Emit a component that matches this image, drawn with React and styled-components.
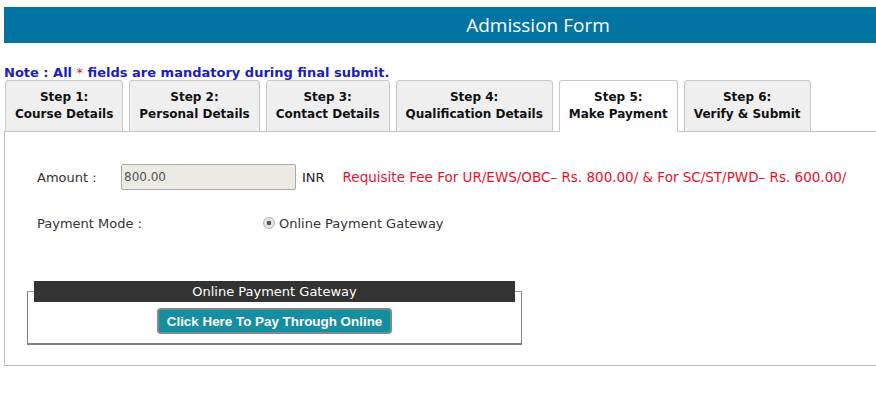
import React from 'react'
import styled, { createGlobalStyle } from 'styled-components'

const GlobalStyle = createGlobalStyle`
  html, body {
    margin: 0;
    padding: 0;
    overflow: hidden;
    background: #fff;
  }
  body {
    font-family: "DejaVu Sans", Verdana, sans-serif;
    font-size: 13px;
    color: #333;
  }
`

const Page = styled.div`
  width: 1068px;
  padding: 7px 0 0 4px;
`

const Header = styled.div`
  height: 36px;
  background: #0274a2;
  color: #fff;
  font-family: "Open Sans", sans-serif;
  font-size: 19px;
  line-height: 36px;
  text-align: center;
`

const Note = styled.div`
  margin-top: 22px;
  color: #1c1cc4;
  font-weight: bold;
  font-size: 13px;
  line-height: 15px;
  span {
    color: #e8112d;
    font-weight: normal;
  }
`

const Tabs = styled.div`
  display: flex;
  gap: 6px;
  padding-left: 1px;
  position: relative;
  z-index: 1;
`

const Tab = styled.div`
  padding: 8px 9px;
  background: ${p => (p.$active ? '#fff' : '#efefef')};
  border: 1px solid #c8c8c8;
  border-bottom-color: ${p => (p.$active ? '#fff' : '#c8c8c8')};
  border-radius: 3px 3px 0 0;
  color: #111;
  font-weight: bold;
  font-size: 12px;
  line-height: 17px;
  text-align: center;
  white-space: nowrap;
  margin-bottom: -1px;
`

const Panel = styled.div`
  border: 1px solid #c0c0c0;
  box-sizing: border-box;
  height: 235px;
  padding: 32px 0 0 32px;
`

const Row = styled.div`
  display: flex;
  align-items: center;
  height: 26px;
  margin-bottom: ${p => p.$gap || 0}px;
`

const Label = styled.div`
  width: ${p => p.$w}px;
  color: #333;
`

const AmountBox = styled.div`
  box-sizing: border-box;
  width: 175px;
  height: 26px;
  background: #ebebe4;
  border: 1px solid #a9a9a9;
  border-radius: 2px;
  color: #545454;
  font-size: 12px;
  line-height: 24px;
  padding-left: 2px;
`

const Unit = styled.span`
  margin-left: 6px;
  color: #222;
`

const Fee = styled.span`
  margin-left: 18px;
  color: #e8112d;
  font-size: 13.5px;
`

const Radio = styled.span`
  display: inline-block;
  width: 10px;
  height: 10px;
  border-radius: 50%;
  border: 1px solid #b4b4b4;
  background: radial-gradient(circle, #555 0 2px, #e4e4e4 2.6px);
  margin-right: 4px;
  box-sizing: content-box;
`

const GatewayWrap = styled.div`
  margin-left: -10px;
`

const Gateway = styled.fieldset`
  width: 495px;
  box-sizing: border-box;
  margin: 0;
  padding: 0 6px 9px;
  border: 1px solid #808080;
  border-top-color: #999;
  border-bottom: 2px solid #808080;
  display: flex;
  justify-content: center;
`

const Legend = styled.legend`
  width: 100%;
  padding: 0;
  height: 21px;
  line-height: 21px;
  background: #333;
  color: #fff;
  text-align: center;
  font-size: 13px;
`

const PayButton = styled.button`
  margin-top: 6px;
  height: 26px;
  padding: 0 8px;
  background: #12909f;
  color: #fff;
  border: 2px solid #7d8a8d;
  border-radius: 4px;
  font-family: "Liberation Sans", Arial, sans-serif;
  font-weight: bold;
  font-size: 13.4px;
  cursor: pointer;
`

const steps = [
  ['Step 1:', 'Course Details'],
  ['Step 2:', 'Personal Details'],
  ['Step 3:', 'Contact Details'],
  ['Step 4:', 'Qualification Details'],
  ['Step 5:', 'Make Payment'],
  ['Step 6:', 'Verify & Submit'],
]

export default function App() {
  return (
    <>
      <GlobalStyle />
      <Page>
        <Header>Admission Form</Header>
        <Note>
          Note : All <span>*</span> fields are mandatory during final submit.
        </Note>
        <Tabs>
          {steps.map(([step, title], i) => (
            <Tab key={step} $active={i === 4}>
              {step}
              <br />
              {title}
            </Tab>
          ))}
        </Tabs>
        <Panel>
          <Row $gap={20}>
            <Label $w={84}>Amount :</Label>
            <AmountBox>800.00</AmountBox>
            <Unit>INR</Unit>
            <Fee>Requisite Fee For UR/EWS/OBC&#8211; Rs. 800.00/ &amp; For SC/ST/PWD&#8211; Rs. 600.00/</Fee>
          </Row>
          <Row $gap={45}>
            <Label $w={226}>Payment Mode :</Label>
            <Radio />
            Online Payment Gateway
          </Row>
          <GatewayWrap>
            <Gateway>
              <Legend>Online Payment Gateway</Legend>
              <PayButton>Click Here To Pay Through Online</PayButton>
            </Gateway>
          </GatewayWrap>
        </Panel>
      </Page>
    </>
  )
}
